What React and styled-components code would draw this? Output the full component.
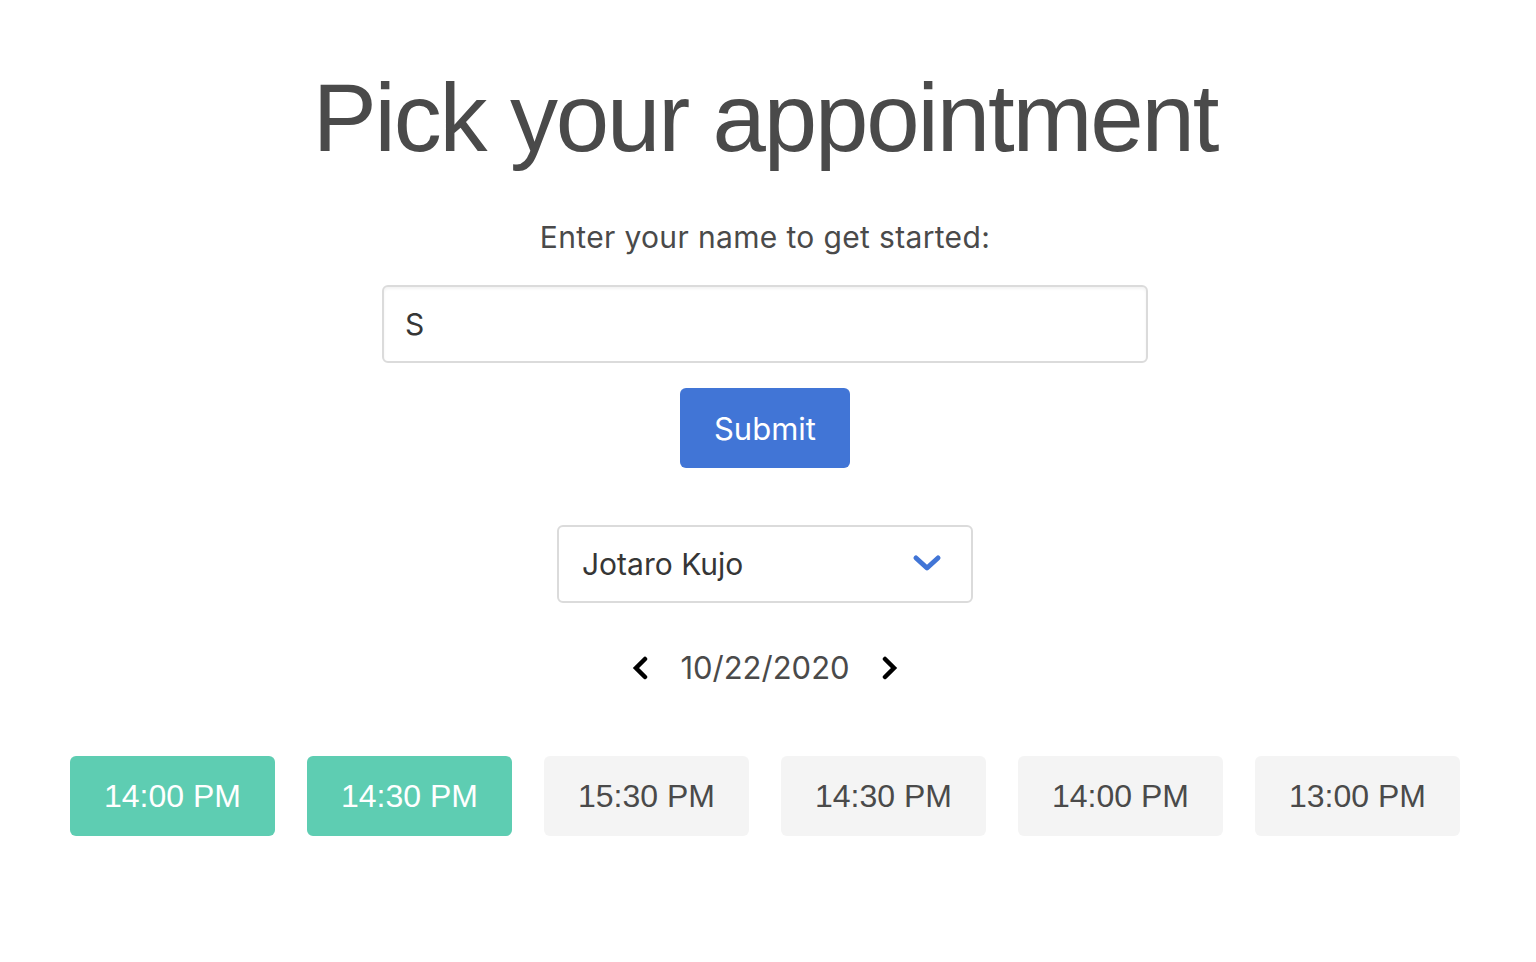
import React, { useState } from "react";
import styled, { createGlobalStyle } from "styled-components";

const GlobalStyle = createGlobalStyle`
  html, body { margin: 0; padding: 0; background: #ffffff; }
  body { font-family: Inter, "Noto Sans", sans-serif; color: #4a4a4a; }
  * { box-sizing: border-box; }
`;

const Page = styled.main`
  width: 1530px;
  padding-top: 70px;
  display: flex;
  flex-direction: column;
  align-items: center;
`;

const Title = styled.h1`
  margin: 0;
  font-family: "Liberation Sans", Arial, sans-serif;
  font-weight: 400;
  font-size: 96px;
  line-height: 96px;
  letter-spacing: -2.15px;
  color: #4a4a4a;
`;

const Label = styled.p`
  margin: 54px 0 0;
  font-size: 30px;
  line-height: 34px;
  letter-spacing: 0.35px;
  color: #4a4a4a;
`;

const NameInput = styled.input`
  margin-top: 31px;
  width: 766px;
  height: 78px;
  padding: 0 21px;
  border: 2px solid #dbdbdb;
  border-radius: 6px;
  box-shadow: inset 0 2px 3px rgba(10, 10, 10, 0.05);
  font-family: Inter, sans-serif;
  font-size: 30px;
  color: #363636;
  outline: none;
`;

const SubmitButton = styled.button`
  margin-top: 25px;
  width: 170px;
  height: 80px;
  border: none;
  border-radius: 6px;
  background: #4175d6;
  color: #ffffff;
  font-family: Inter, sans-serif;
  font-size: 31px;
  cursor: pointer;
`;

const SelectBox = styled.div`
  margin-top: 57px;
  width: 416px;
  height: 78px;
  border: 2px solid #dbdbdb;
  border-radius: 6px;
  display: flex;
  align-items: center;
  justify-content: space-between;
  padding: 0 29px 0 23px;
  font-size: 30px;
  color: #363636;
`;

const DateRow = styled.div`
  margin-top: 45px;
  height: 40px;
  display: flex;
  align-items: center;
  gap: 32px;
`;

const DateText = styled.span`
  font-size: 31px;
  line-height: 40px;
  color: #4a4a4a;
`;

const ArrowButton = styled.button`
  background: none;
  border: none;
  padding: 0;
  width: 16px;
  height: 24px;
  display: flex;
  align-items: center;
  justify-content: center;
  cursor: pointer;
`;

const Slots = styled.div`
  margin-top: 68px;
  align-self: flex-start;
  margin-left: 70px;
  width: 1390px;
  display: grid;
  grid-template-columns: repeat(6, 1fr);
  gap: 32px;
`;

const Slot = styled.button`
  height: 80px;
  border: none;
  border-radius: 6px;
  background: ${(p) => (p.$selected ? "#5ecdb2" : "#f4f4f4")};
  color: ${(p) => (p.$selected ? "#ffffff" : "#4a4a4a")};
  font-family: "Liberation Sans", Arial, sans-serif;
  font-size: 32px;
  cursor: pointer;
`;

const Chevron = ({ dir }) => {
  const pts = dir === "left" ? "13,3 4,12 13,21" : "3,3 12,12 3,21";
  return (
    <svg width="16" height="24" viewBox="0 0 16 24">
      <polyline
        points={pts}
        fill="none"
        stroke="#000"
        strokeWidth="4.5"
        strokeLinecap="round"
        strokeLinejoin="miter"
      />
    </svg>
  );
};

const DownChevron = () => (
  <svg width="30" height="20" viewBox="0 0 30 20">
    <polyline
      points="4,4 15,14 26,4"
      fill="none"
      stroke="#4175d6"
      strokeWidth="5"
      strokeLinecap="round"
      strokeLinejoin="round"
    />
  </svg>
);

const slots = [
  { t: "14:00 PM", sel: true },
  { t: "14:30 PM", sel: true },
  { t: "15:30 PM", sel: false },
  { t: "14:30 PM", sel: false },
  { t: "14:00 PM", sel: false },
  { t: "13:00 PM", sel: false },
];

export default function App() {
  const [name, setName] = useState("S");
  return (
    <>
      <GlobalStyle />
      <Page>
        <Title>Pick your appointment</Title>
        <Label>Enter your name to get started:</Label>
        <NameInput value={name} onChange={(e) => setName(e.target.value)} />
        <SubmitButton>Submit</SubmitButton>
        <SelectBox>
          <span>Jotaro Kujo</span>
          <DownChevron />
        </SelectBox>
        <DateRow>
          <ArrowButton aria-label="previous day">
            <Chevron dir="left" />
          </ArrowButton>
          <DateText>10/22/2020</DateText>
          <ArrowButton aria-label="next day">
            <Chevron dir="right" />
          </ArrowButton>
        </DateRow>
        <Slots>
          {slots.map((s, i) => (
            <Slot key={i} $selected={s.sel}>
              {s.t}
            </Slot>
          ))}
        </Slots>
      </Page>
    </>
  );
}
